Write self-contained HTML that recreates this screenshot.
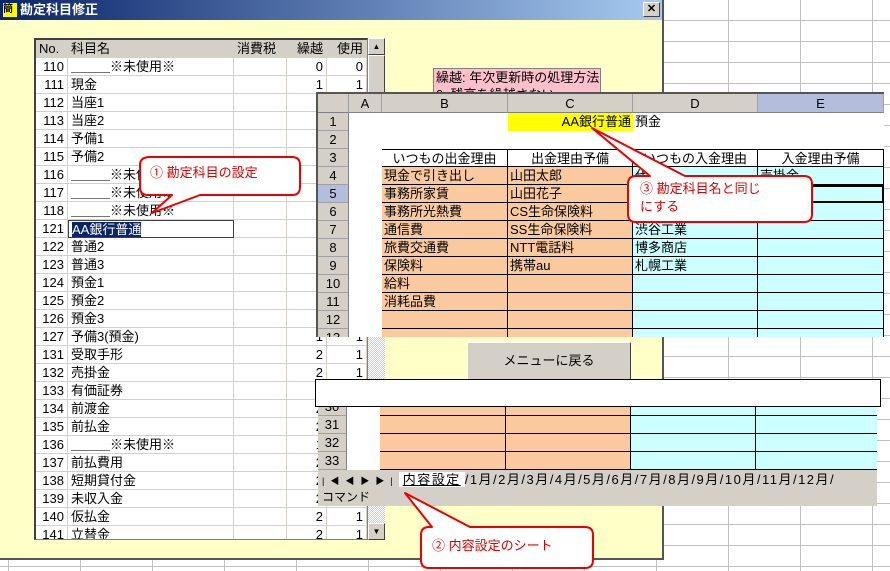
<!DOCTYPE html>
<html><head><meta charset="utf-8"><style>
*{margin:0;padding:0;box-sizing:border-box}
body{width:890px;height:571px;overflow:hidden;background:#fff;position:relative;font-family:"Liberation Sans","Noto Sans CJK JP",sans-serif;font-size:13px;color:#000}
.a{position:absolute}
.gridbg{left:0;top:0;width:890px;height:571px;background-image:linear-gradient(#c0c0c0 1px,transparent 1px),linear-gradient(90deg,#c0c0c0 1px,transparent 1px);background-size:72px 21px;background-position:8px 20px}
.dlg{left:0;top:0;width:664px;height:560px;background:#ffffc8;border-right:2px solid #555;border-bottom:2px solid #555}
.title{left:0;top:0;width:662px;height:20px;background:linear-gradient(90deg,#0a246a,#a6caf0);color:#fff;font-weight:bold;font-size:13px;line-height:20px;padding-left:20px}
.list{left:34px;top:38px;width:334px;height:502px;background:#fff;border:1px solid #808080;border-left:2px solid #404040;border-top:2px solid #404040;overflow:hidden}
.r{position:absolute;left:0;width:334px;height:18px;border-bottom:1px solid #d4d0c8;line-height:17px}
.r span{position:absolute;top:0;height:18px;border-right:1px solid #d4d0c8;padding:0 3px;white-space:nowrap;overflow:hidden}
.c1{left:0;width:32px;text-align:right}.c2{left:32px;width:166px}.c3{left:198px;width:53px}.c4{left:251px;width:40px;text-align:right}.c5{left:291px;width:40px;text-align:right}
.hd{background:#d4d0c8}
.sb{left:368px;top:38px;width:17px;height:502px;background:repeating-conic-gradient(#d4d0c8 0 25%,#fff 0 50%) 0 0/2px 2px}
.sbb{width:17px;height:17px;background:#d4d0c8;border:1px solid;border-color:#fff #404040 #404040 #fff;font-size:8px;text-align:center;line-height:15px}
.xl{background:#fff;overflow:hidden}
.rh{position:absolute;left:0;width:31px;height:18px;background:#d4d0c8;border-bottom:1px solid #a0a0a0;border-right:1px solid #808080;text-align:center;line-height:18px}
.ch{position:absolute;top:0;height:19px;background:#d4d0c8;border-right:1px solid #a0a0a0;border-bottom:1px solid #808080;text-align:center;line-height:19px}
.cl{position:absolute;height:18px;line-height:18px;padding:0 2px;white-space:nowrap;overflow:hidden}
.o{background:#fac99e;border-right:1px solid #000;border-bottom:1px solid #000}
.cy{background:#ccffff;border-right:1px solid #000;border-bottom:1px solid #000}
.wb{border-right:1px solid #000;border-bottom:1px solid #000;text-align:center}
</style></head><body>
<div class="a gridbg"></div>
<div class="a dlg"></div>
<div class="a title"><span style="position:absolute;left:3px;top:3px;width:14px;height:14px;background:#ff0;color:#000;font-size:10px;line-height:14px">簡</span>勘定科目修正</div>
<div class="a sbb" style="left:643px;top:2px;width:17px;height:15px;line-height:13px;font-size:11px;font-weight:bold">✕</div>

<div class="a list">
<div class="r hd" style="top:0"><span class="c1" style="text-align:left">No.</span><span class="c2">科目名</span><span class="c3">消費税</span><span class="c4">繰越</span><span class="c5">使用</span></div>
<div class="r" style="top:18px"><span class="c1">110</span><span class="c2">＿＿＿※未使用※</span><span class="c3"></span><span class="c4">0</span><span class="c5">0</span></div>
<div class="r" style="top:36px"><span class="c1">111</span><span class="c2">現金</span><span class="c3"></span><span class="c4">1</span><span class="c5">1</span></div>
<div class="r" style="top:54px"><span class="c1">112</span><span class="c2">当座1</span><span class="c3"></span><span class="c4">1</span><span class="c5">1</span></div>
<div class="r" style="top:72px"><span class="c1">113</span><span class="c2">当座2</span><span class="c3"></span><span class="c4">1</span><span class="c5">1</span></div>
<div class="r" style="top:90px"><span class="c1">114</span><span class="c2">予備1</span><span class="c3"></span><span class="c4">1</span><span class="c5">1</span></div>
<div class="r" style="top:108px"><span class="c1">115</span><span class="c2">予備2</span><span class="c3"></span><span class="c4">1</span><span class="c5">1</span></div>
<div class="r" style="top:126px"><span class="c1">116</span><span class="c2">＿＿＿※未使用※</span><span class="c3"></span><span class="c4">1</span><span class="c5">1</span></div>
<div class="r" style="top:144px"><span class="c1">117</span><span class="c2">＿＿＿※未使用※</span><span class="c3"></span><span class="c4">1</span><span class="c5">1</span></div>
<div class="r" style="top:162px"><span class="c1">118</span><span class="c2">＿＿＿※未使用※</span><span class="c3"></span><span class="c4">1</span><span class="c5">1</span></div>
<div class="r" style="top:180px"><span class="c1">121</span><span class="c2" style="border:1px solid #404040;background:#fff"><b style="font-weight:normal;background:#0a246a;color:#fff">AA銀行普通</b></span><span class="c3"></span><span class="c4">1</span><span class="c5">1</span></div>
<div class="r" style="top:198px"><span class="c1">122</span><span class="c2">普通2</span><span class="c3"></span><span class="c4">1</span><span class="c5">1</span></div>
<div class="r" style="top:216px"><span class="c1">123</span><span class="c2">普通3</span><span class="c3"></span><span class="c4">1</span><span class="c5">1</span></div>
<div class="r" style="top:234px"><span class="c1">124</span><span class="c2">預金1</span><span class="c3"></span><span class="c4">1</span><span class="c5">1</span></div>
<div class="r" style="top:252px"><span class="c1">125</span><span class="c2">預金2</span><span class="c3"></span><span class="c4">1</span><span class="c5">1</span></div>
<div class="r" style="top:270px"><span class="c1">126</span><span class="c2">預金3</span><span class="c3"></span><span class="c4">1</span><span class="c5">1</span></div>
<div class="r" style="top:288px"><span class="c1">127</span><span class="c2">予備3(預金)</span><span class="c3"></span><span class="c4">1</span><span class="c5">1</span></div>
<div class="r" style="top:306px"><span class="c1">131</span><span class="c2">受取手形</span><span class="c3"></span><span class="c4">2</span><span class="c5">1</span></div>
<div class="r" style="top:324px"><span class="c1">132</span><span class="c2">売掛金</span><span class="c3"></span><span class="c4">2</span><span class="c5">1</span></div>
<div class="r" style="top:342px"><span class="c1">133</span><span class="c2">有価証券</span><span class="c3"></span><span class="c4">1</span><span class="c5">1</span></div>
<div class="r" style="top:360px"><span class="c1">134</span><span class="c2">前渡金</span><span class="c3"></span><span class="c4">2</span><span class="c5">1</span></div>
<div class="r" style="top:378px"><span class="c1">135</span><span class="c2">前払金</span><span class="c3"></span><span class="c4">2</span><span class="c5">1</span></div>
<div class="r" style="top:396px"><span class="c1">136</span><span class="c2">＿＿＿※未使用※</span><span class="c3"></span><span class="c4">1</span><span class="c5">1</span></div>
<div class="r" style="top:414px"><span class="c1">137</span><span class="c2">前払費用</span><span class="c3"></span><span class="c4">2</span><span class="c5">1</span></div>
<div class="r" style="top:432px"><span class="c1">138</span><span class="c2">短期貸付金</span><span class="c3"></span><span class="c4">2</span><span class="c5">1</span></div>
<div class="r" style="top:450px"><span class="c1">139</span><span class="c2">未収入金</span><span class="c3"></span><span class="c4">2</span><span class="c5">1</span></div>
<div class="r" style="top:468px"><span class="c1">140</span><span class="c2">仮払金</span><span class="c3"></span><span class="c4">2</span><span class="c5">1</span></div>
<div class="r" style="top:486px"><span class="c1">141</span><span class="c2">立替金</span><span class="c3"></span><span class="c4">2</span><span class="c5">1</span></div>
</div>
<div class="a sb"><div class="sbb">▲</div><div class="sbb" style="height:60px"></div><div class="sbb" style="position:absolute;bottom:0">▼</div></div>

<div class="a" style="left:433px;top:68px;width:168px;height:25px;background:#ffc0cb;border:1px solid #808080;line-height:17px;padding-left:2px;overflow:hidden">繰越: 年次更新時の処理方法<br>0: 残高を繰越さない</div>

<div class="a" style="left:467px;top:342px;width:164px;height:38px;background:#d4d0c8;border:1px solid;border-color:#fff #404040 #404040 #fff;text-align:center;line-height:36px">メニューに戻る</div>

<!-- upper sheet -->
<div class="a xl" style="left:316px;top:92px;width:568px;height:245px;border-top:2px solid #555;border-left:2px solid #555">
<div class="ch" style="left:0;width:31px"></div>
<div class="ch" style="left:31px;width:33px">A</div>
<div class="ch" style="left:64px;width:126px">B</div>
<div class="ch" style="left:190px;width:125px">C</div>
<div class="ch" style="left:315px;width:125px">D</div>
<div class="ch" style="left:440px;width:126px;background:#b4bedc">E</div>
<div class="rh" style="top:19px">1</div><div class="rh" style="top:37px">2</div><div class="rh" style="top:55px">3</div><div class="rh" style="top:73px">4</div><div class="rh" style="top:91px;background:#b4bedc">5</div><div class="rh" style="top:109px">6</div><div class="rh" style="top:127px">7</div><div class="rh" style="top:145px">8</div><div class="rh" style="top:163px">9</div><div class="rh" style="top:181px">10</div><div class="rh" style="top:199px">11</div><div class="rh" style="top:217px">12</div><div class="rh" style="top:235px">13</div>
<div class="cl" style="left:190px;top:19px;width:125px;background:#ff0;text-align:right">AA銀行普通</div>
<div class="cl" style="left:315px;top:19px;width:125px">預金</div>
<div class="cl wb" style="left:64px;top:55px;width:126px;border-top:1px solid #000">いつもの出金理由</div>
<div class="cl wb" style="left:190px;top:55px;width:125px;border-top:1px solid #000">出金理由予備</div>
<div class="cl wb" style="left:315px;top:55px;width:125px;border-top:1px solid #000">いつもの入金理由</div>
<div class="cl wb" style="left:440px;top:55px;width:126px;border-top:1px solid #000">入金理由予備</div>

<div class="cl o" style="left:64px;top:73px;width:126px">現金で引き出し</div><div class="cl o" style="left:190px;top:73px;width:125px">山田太郎</div><div class="cl cy" style="left:315px;top:73px;width:125px">代表者</div><div class="cl cy" style="left:440px;top:73px;width:126px">売掛金</div>
<div class="cl o" style="left:64px;top:91px;width:126px">事務所家賃</div><div class="cl o" style="left:190px;top:91px;width:125px">山田花子</div><div class="cl cy" style="left:315px;top:91px;width:125px">現金</div><div class="cl cy" style="left:440px;top:91px;width:126px;border:2px solid #000"></div>
<div class="cl o" style="left:64px;top:109px;width:126px">事務所光熱費</div><div class="cl o" style="left:190px;top:109px;width:125px">CS生命保険料</div><div class="cl cy" style="left:315px;top:109px;width:125px">新宿</div><div class="cl cy" style="left:440px;top:109px;width:126px"></div>
<div class="cl o" style="left:64px;top:127px;width:126px">通信費</div><div class="cl o" style="left:190px;top:127px;width:125px">SS生命保険料</div><div class="cl cy" style="left:315px;top:127px;width:125px">渋谷工業</div><div class="cl cy" style="left:440px;top:127px;width:126px"></div>
<div class="cl o" style="left:64px;top:145px;width:126px">旅費交通費</div><div class="cl o" style="left:190px;top:145px;width:125px">NTT電話料</div><div class="cl cy" style="left:315px;top:145px;width:125px">博多商店</div><div class="cl cy" style="left:440px;top:145px;width:126px"></div>
<div class="cl o" style="left:64px;top:163px;width:126px">保険料</div><div class="cl o" style="left:190px;top:163px;width:125px">携帯au</div><div class="cl cy" style="left:315px;top:163px;width:125px">札幌工業</div><div class="cl cy" style="left:440px;top:163px;width:126px"></div>
<div class="cl o" style="left:64px;top:181px;width:126px">給料</div><div class="cl o" style="left:190px;top:181px;width:125px"></div><div class="cl cy" style="left:315px;top:181px;width:125px"></div><div class="cl cy" style="left:440px;top:181px;width:126px"></div>
<div class="cl o" style="left:64px;top:199px;width:126px">消耗品費</div><div class="cl o" style="left:190px;top:199px;width:125px"></div><div class="cl cy" style="left:315px;top:199px;width:125px"></div><div class="cl cy" style="left:440px;top:199px;width:126px"></div>
<div class="cl o" style="left:64px;top:217px;width:126px"></div><div class="cl o" style="left:190px;top:217px;width:125px"></div><div class="cl cy" style="left:315px;top:217px;width:125px"></div><div class="cl cy" style="left:440px;top:217px;width:126px"></div>
<div class="cl o" style="left:64px;top:235px;width:126px"></div><div class="cl o" style="left:190px;top:235px;width:125px"></div><div class="cl cy" style="left:315px;top:235px;width:125px"></div><div class="cl cy" style="left:440px;top:235px;width:126px"></div>
</div>

<div class="a" style="left:315px;top:379px;width:566px;height:28px;background:#fff;border:1px solid #000"></div>

<!-- lower sheet -->
<div class="a xl" style="left:318px;top:407px;width:559px;height:99px">
<div class="rh" style="top:-9px;left:0;width:29px">30</div><div class="rh" style="top:9px;width:29px">31</div><div class="rh" style="top:27px;width:29px">32</div><div class="rh" style="top:45px;width:29px">33</div>
<div class="cl o" style="left:62px;top:-9px;width:126px"></div><div class="cl o" style="left:188px;top:-9px;width:125px"></div><div class="cl cy" style="left:313px;top:-9px;width:125px"></div><div class="cl cy" style="left:438px;top:-9px;width:126px"></div>
<div class="cl o" style="left:62px;top:9px;width:126px"></div><div class="cl o" style="left:188px;top:9px;width:125px"></div><div class="cl cy" style="left:313px;top:9px;width:125px"></div><div class="cl cy" style="left:438px;top:9px;width:126px"></div>
<div class="cl o" style="left:62px;top:27px;width:126px"></div><div class="cl o" style="left:188px;top:27px;width:125px"></div><div class="cl cy" style="left:313px;top:27px;width:125px"></div><div class="cl cy" style="left:438px;top:27px;width:126px"></div>
<div class="cl o" style="left:62px;top:45px;width:126px"></div><div class="cl o" style="left:188px;top:45px;width:125px"></div><div class="cl cy" style="left:313px;top:45px;width:125px"></div><div class="cl cy" style="left:438px;top:45px;width:126px"></div>
<div class="a" style="left:0;top:63px;width:559px;height:19px;background:#d4d0c8;line-height:19px;white-space:nowrap;font-size:13px;letter-spacing:1.5px"><span style="font-size:9px;letter-spacing:6px;padding-left:4px">|◀◀▶▶|</span><span style="background:#fff;text-decoration:underline;padding:0 4px">内容設定</span>/1月/2月/3月/4月/5月/6月/7月/8月/9月/10月/11月/12月/</div>
<div class="a" style="left:0;top:82px;width:559px;height:17px;background:#d4d0c8;line-height:17px;font-size:12px;padding-left:4px">コマンド</div>
</div>

<svg class="a" style="left:0;top:0" width="890" height="571">
<g fill="#fff" stroke="#e00" stroke-width="2" stroke-linejoin="round">
<path d="M150,157 H292 Q300,157 300,165 V187 Q300,195 292,195 H200 L152,213 L172,195 H148 Q140,195 140,187 V165 Q140,157 150,157 Z"/>
<path d="M636,176 H650 L592,128 L685,176 H804 Q812,176 812,184 V214 Q812,222 804,222 H636 Q628,222 628,214 V184 Q628,176 636,176 Z"/>
<path d="M429,527 H432 L405,493 L470,527 H585 Q593,527 593,535 V560 Q593,568 585,568 H429 Q421,568 421,560 V535 Q421,527 429,527 Z"/>
</g>
<g fill="#d00" font-family="Liberation Sans,Noto Sans CJK JP,sans-serif" font-size="13">
<text x="150" y="177">①  勘定科目の設定</text>
<text x="640" y="193">③  勘定科目名と同じ</text>
<text x="640" y="211">にする</text>
<text x="432" y="550">②  内容設定のシート</text>
</g>
</svg>
</body></html>
